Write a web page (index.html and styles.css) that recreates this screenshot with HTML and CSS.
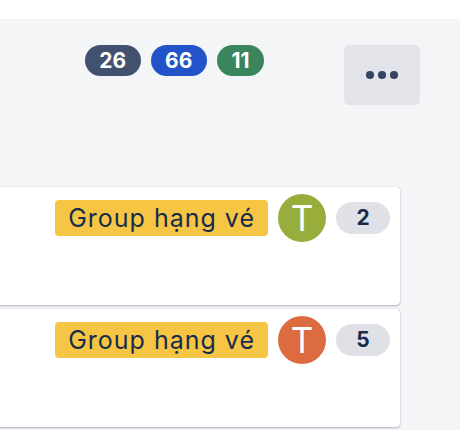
FILE: index.html
```html
<!DOCTYPE html>
<html lang="vi">
<head>
<meta charset="utf-8">
<link rel="stylesheet" href="styles.css">
</head>
<body>
<div class="panel">
  <div class="header">
    <div class="badges">
      <span class="badge badge-gray">26</span>
      <span class="badge badge-blue">66</span>
      <span class="badge badge-green">11</span>
    </div>
    <button class="more" type="button" aria-label="More">
      <span class="dot"></span><span class="dot"></span><span class="dot"></span>
    </button>
  </div>
  <div class="cards">
    <div class="card">
      <div class="card-row">
        <span class="label">Group hạng vé</span>
        <span class="avatar avatar-green">T</span>
        <span class="count">2</span>
      </div>
    </div>
    <div class="card">
      <div class="card-row">
        <span class="label">Group hạng vé</span>
        <span class="avatar avatar-orange">T</span>
        <span class="count">5</span>
      </div>
    </div>
  </div>
</div>
</body>
</html>
```

FILE: styles.css
```css
* { box-sizing: border-box; }

html, body {
  margin: 0;
  padding: 0;
  background: #ffffff;
  font-family: Inter, "Noto Sans", "Liberation Sans", sans-serif;
}

.panel {
  margin-top: 19px;
  width: 460px;
  height: 411px;
  background: #F4F5F7;
  overflow: hidden;
}

.header {
  display: flex;
  justify-content: flex-end;
  align-items: flex-start;
  padding: 26px 40px 0 0;
}

.badges {
  display: flex;
  gap: 10px;
  margin-right: 80px;
}

.badge {
  height: 31px;
  padding: 0 14.5px;
  border-radius: 16px;
  color: #ffffff;
  font-weight: 700;
  font-size: 21px;
  line-height: 31px;
}

.badge-gray { background: #42526E; }
.badge-blue { background: #2353C9; }
.badge-green { background: #3A855C; }

.more {
  width: 76px;
  height: 60px;
  border: 0;
  border-radius: 5px;
  background: #E2E4E9;
  display: flex;
  align-items: center;
  justify-content: center;
  gap: 4.5px;
  padding: 0;
}

.dot {
  width: 7.5px;
  height: 7.5px;
  border-radius: 50%;
  background: #344563;
}

.cards {
  margin-top: 82px;
  margin-left: -20px;
  width: 420px;
  display: flex;
  flex-direction: column;
  gap: 4px;
}

.card {
  height: 118px;
  background: #ffffff;
  border-radius: 4px;
  box-shadow: 0 1px 2px rgba(9, 30, 66, 0.28), 0 0 1px rgba(9, 30, 66, 0.3);
  padding: 7px 10px 0 0;
}

.card-row {
  display: flex;
  justify-content: flex-end;
  align-items: center;
  gap: 10px;
}

.label {
  height: 36px;
  padding: 0 13px;
  border-radius: 4px;
  background: #F7C544;
  color: #172B4D;
  font-size: 25px;
  letter-spacing: 1px;
  line-height: 36px;
  white-space: nowrap;
}

.avatar {
  width: 48px;
  height: 48px;
  border-radius: 50%;
  color: #ffffff;
  font-size: 35px;
  line-height: 48px;
  text-align: center;
  font-weight: 400;
}

.avatar-green { background: #97AE3D; }
.avatar-orange { background: #DC6C3F; }

.count {
  width: 54px;
  height: 32px;
  border-radius: 16px;
  background: #DFE1E6;
  color: #172B4D;
  font-weight: 700;
  font-size: 21px;
  line-height: 32px;
  text-align: center;
}
```
